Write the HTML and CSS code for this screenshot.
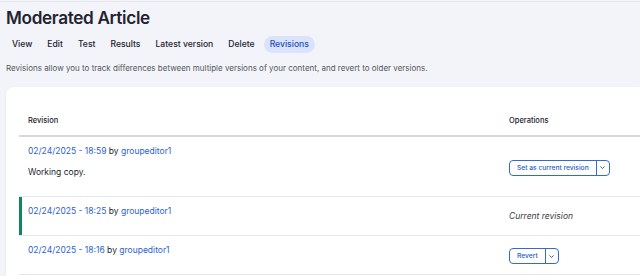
FILE: index.html
```html
<!DOCTYPE html>
<html lang="en">
<head>
<meta charset="utf-8">
<title>Moderated Article</title>
<link rel="stylesheet" href="styles.css">
</head>
<body>
<div class="page">
  <h1 class="title">Moderated Article</h1>
  <ul class="tabs">
    <li><a class="tab" href="#">View</a></li>
    <li><a class="tab" href="#">Edit</a></li>
    <li><a class="tab" href="#">Test</a></li>
    <li><a class="tab" href="#">Results</a></li>
    <li><a class="tab" href="#">Latest version</a></li>
    <li><a class="tab" href="#">Delete</a></li>
    <li><a class="tab active" href="#">Revisions</a></li>
  </ul>
  <p class="desc">Revisions allow you to track differences between multiple versions of your content, and revert to older versions.</p>
  <div class="card">
    <table class="rev-table">
      <thead>
        <tr><th class="col-rev">Revision</th><th class="col-ops">Operations</th></tr>
      </thead>
      <tbody>
        <tr>
          <td class="rev"><a href="#">02/24/2025 - 18:59</a> by <a href="#">groupeditor1</a><p class="log">Working copy.</p></td>
          <td class="ops"><div class="dropbutton"><span class="db-main">Set as current revision</span><span class="db-toggle"><svg viewBox="0 0 10 10" width="7" height="7"><path d="M2 3.5 L5 6.5 L8 3.5" fill="none" stroke="currentColor" stroke-width="1.4"/></svg></span></div></td>
        </tr>
        <tr class="current">
          <td class="rev"><a href="#">02/24/2025 - 18:25</a> by <a href="#">groupeditor1</a></td>
          <td class="ops"><em>Current revision</em></td>
        </tr>
        <tr>
          <td class="rev"><a href="#">02/24/2025 - 18:16</a> by <a href="#">groupeditor1</a></td>
          <td class="ops"><div class="dropbutton"><span class="db-main">Revert</span><span class="db-toggle"><svg viewBox="0 0 10 10" width="7" height="7"><path d="M2 3.5 L5 6.5 L8 3.5" fill="none" stroke="currentColor" stroke-width="1.4"/></svg></span></div></td>
        </tr>
      </tbody>
    </table>
  </div>
</div>
</body>
</html>
```
FILE: styles.css
```css
* { box-sizing: border-box; }
html, body { margin: 0; padding: 0; }
body {
  background: #f3f4f9;
  font-family: Inter, "Noto Sans", sans-serif;
  color: #222330;
  overflow: hidden;
  padding-top: 1px;
}
.page {
  border-top: 1px solid #e6e7ee;
  padding-left: 6px;
}
.title {
  margin: 5px 0 0;
  font-size: 17.2px;
  line-height: 22px;
  font-weight: 600;
  letter-spacing: -0.02em;
  color: #222330;
}
.tabs {
  list-style: none;
  margin: 7px 0 0;
  padding: 0;
  display: flex;
  gap: 3px;
}
.tab {
  display: block;
  height: 17px;
  line-height: 17px;
  padding: 0 6px;
  font-size: 8.6px;
  font-weight: 500;
  color: #222330;
  text-decoration: none;
  border-radius: 9px;
}
.tab.active {
  background: #dae3fb;
  color: #1d4fbd;
}
.desc {
  margin: 10px 0 0;
  font-size: 8px;
  line-height: 10px;
  color: #55565b;
}
.card {
  margin-top: 14px;
  background: #fff;
  border-radius: 8px 0 0 8px;
  box-shadow: 0 1px 3px rgba(0,0,0,0.06);
  padding: 18px 0 40px 13px;
  min-height: 200px;
}
.rev-table {
  width: 100%;
  border-collapse: collapse;
}
.rev-table th {
  text-align: left;
  font-size: 7.5px;
  font-weight: 500;
  color: #222330;
  height: 31px;
  padding: 0 9px;
  border-bottom: 2px solid #d8d9df;
  vertical-align: middle;
}
.col-rev { width: 481px; }
.rev-table td {
  border-bottom: 1px solid #e6e7ee;
  font-size: 8.5px;
  line-height: 12px;
  color: #222330;
}
.rev {
  padding: 8px 9px 18px;
  vertical-align: top;
}
.rev a { color: #2c62cf; text-decoration: none; }
.log { margin: 9px 0 0; }
.ops {
  padding: 0 9px;
  vertical-align: middle;
}
.ops em { color: #3b3c44; }
.current .rev { box-shadow: inset 3px 0 0 #0f8661; }
.dropbutton {
  display: inline-flex;
  height: 16px;
  border: 1px solid #3569d1;
  border-radius: 4px;
  color: #2a5cc6;
  font-size: 6.7px;
  font-weight: 500;
  line-height: 14px;
  position: relative;
  top: 1px;
}
.db-main { padding: 0 7px; }
.db-toggle {
  width: 13px;
  border-left: 1px solid #3569d1;
  display: flex;
  align-items: center;
  justify-content: center;
}
```
